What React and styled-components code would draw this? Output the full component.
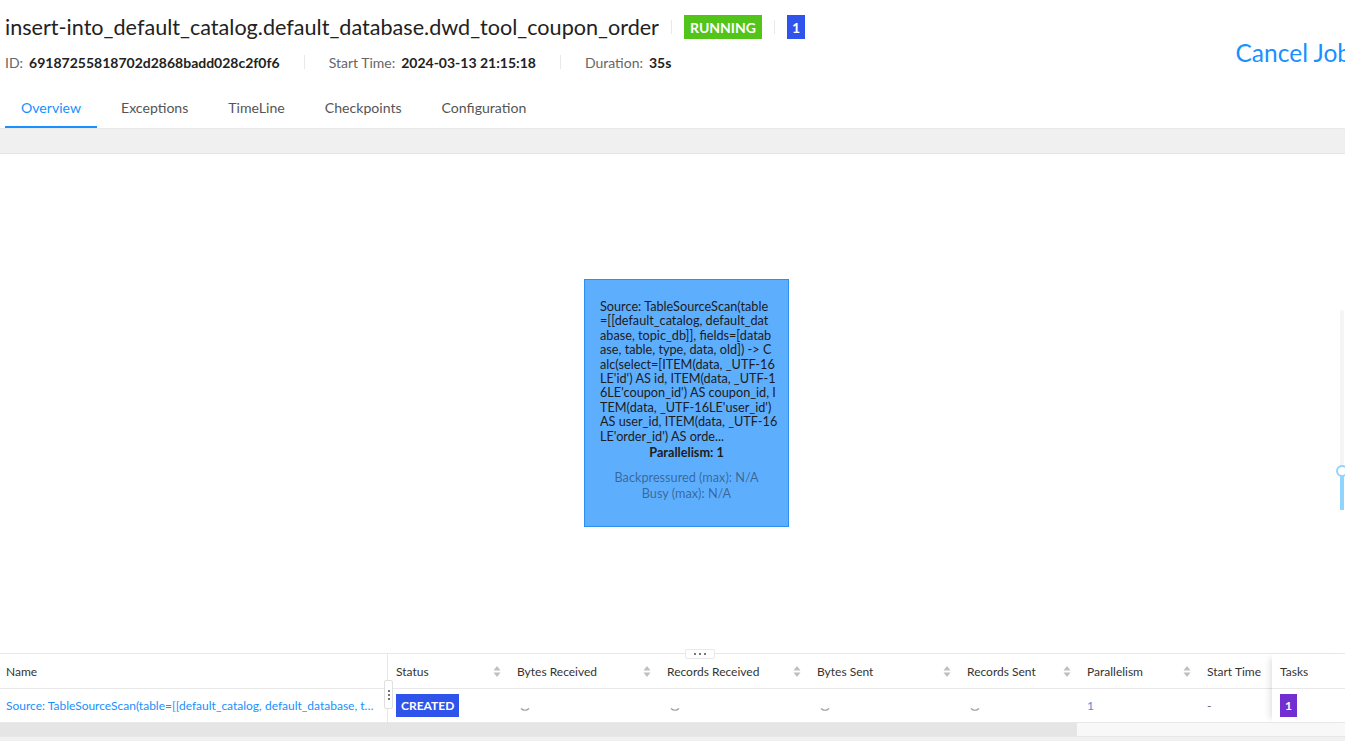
import React from 'react';
import styled, { createGlobalStyle } from 'styled-components';

const FONT = `Lato, "Noto Sans", "Liberation Sans", sans-serif`;

const GlobalStyle = createGlobalStyle`
  html, body {
    margin: 0;
    padding: 0;
    background: #f0f0f0;
  }
  body {
    font-family: ${FONT};
    color: #333;
    overflow: hidden;
  }
  * { box-sizing: border-box; }
`;

const Page = styled.div`
  width: 1345px;
  height: 741px;
  overflow: hidden;
  display: flex;
  flex-direction: column;
  background: #fff;
`;

const Header = styled.div`
  display: flex;
  align-items: flex-start;
  justify-content: space-between;
  padding: 13px 0 0 5px;
`;

const HeaderMain = styled.div`
  display: flex;
  flex-direction: column;
`;

const TitleRow = styled.div`
  display: flex;
  align-items: center;
  height: 28px;
`;

const Title = styled.h1`
  margin: 0;
  font-size: 21.6px;
  font-weight: 400;
  color: #222;
  line-height: 26px;
  white-space: nowrap;
`;

const Divider = styled.span`
  display: inline-block;
  width: 1px;
  height: ${p => p.$h || 14}px;
  background: #e8e8e8;
  margin: 0 ${p => p.$gap || 12}px;
`;

const Tag = styled.span`
  display: inline-flex;
  align-items: center;
  justify-content: center;
  height: 24px;
  padding: 0 ${p => p.$pad || 6}px;
  background: ${p => p.$bg};
  color: #fff;
  font-size: 14px;
  font-weight: 700;
`;

const MetaRow = styled.div`
  display: flex;
  align-items: center;
  height: 20px;
  margin-top: 11px;
  font-size: 14px;
`;

const Label = styled.span`
  color: #666;
  margin-right: 6px;
`;

const Value = styled.span`
  color: #222;
  font-weight: 700;
`;

const CancelLink = styled.a`
  font-size: 24.5px;
  color: #1890ff;
  white-space: nowrap;
  margin-top: 25px;
  margin-right: -6px;
  cursor: pointer;
`;

const Tabs = styled.div`
  display: flex;
  gap: 8px;
  padding-left: 5px;
  margin-top: 16px;
  border-bottom: 1px solid #e8e8e8;
`;

const Tab = styled.div`
  padding: 0 16px;
  height: 40px;
  line-height: 40px;
  font-size: 14.1px;
  color: ${p => (p.$active ? '#1890ff' : '#555')};
  border-bottom: 2px solid ${p => (p.$active ? '#1890ff' : 'transparent')};
  white-space: nowrap;
`;

const Strip = styled.div`
  height: 25px;
  flex-shrink: 0;
  background: #f0f0f0;
  border-bottom: 1px solid #e6e6e6;
`;

const Canvas = styled.div`
  position: relative;
  height: 500px;
  flex-shrink: 0;
  background: #fff;
  border-bottom: 1px solid #e8e8e8;
`;

const Node = styled.div`
  position: absolute;
  left: 584px;
  top: 125px;
  width: 205px;
  height: 248px;
  background: #5eaefe;
  border: 1px solid #2d8ff0;
  padding: 19px 8px 0 15px;
  font-size: 12.7px;
  line-height: 14.4px;
  color: #1c1c1c;
`;

const NodeLine = styled.div`
  white-space: nowrap;
`;

const NodeStrong = styled.div`
  text-align: center;
  font-weight: 700;
  margin-top: 2px;
  padding-right: 7px;
`;

const NodeMuted = styled.div`
  text-align: center;
  color: rgba(0, 0, 0, 0.42);
  line-height: 16px;
  padding-right: 7px;
  margin-top: ${p => p.$mt || 0}px;
`;

const ZoomTrack = styled.div`
  position: absolute;
  right: 1px;
  top: 156px;
  width: 4px;
  height: 200px;
  background: #f5f5f5;
  border-radius: 2px;
`;

const ZoomFill = styled.div`
  position: absolute;
  left: 0;
  top: 164px;
  width: 4px;
  height: 36px;
  background: #91d5ff;
`;

const ZoomHandle = styled.div`
  position: absolute;
  left: -4px;
  top: 155px;
  width: 12px;
  height: 12px;
  border-radius: 50%;
  border: 2px solid #91d5ff;
  background: #fff;
`;

const ResizeBar = styled.div`
  position: absolute;
  left: 685px;
  bottom: -6px;
  width: 30px;
  height: 10px;
  background: #fff;
  border: 1px solid #e8e8e8;
  border-radius: 2px;
  display: flex;
  align-items: center;
  justify-content: center;
  gap: 3px;
  z-index: 2;
`;

const TinyDot = styled.span`
  width: 2px;
  height: 2px;
  background: #777;
`;

const TableWrap = styled.div`
  position: relative;
  background: #fff;
  flex-shrink: 0;
`;

const Row = styled.div`
  display: grid;
  grid-template-columns: 388px 121px 150px 150px 150px 120px 120px 146px;
  height: ${p => p.$h}px;
  border-bottom: 1px solid #e8e8e8;
  align-items: center;
  font-size: 12px;
`;

const Cell = styled.div`
  position: relative;
  height: 100%;
  display: flex;
  align-items: center;
  justify-content: space-between;
  padding: 0 ${p => p.$pr || 8}px 0 ${p => p.$pl || 8}px;
  border-right: ${p => (p.$border ? '1px solid #e8e8e8' : 'none')};
  color: #333;
  white-space: nowrap;
  overflow: hidden;
`;

const NameLink = styled.a`
  color: #1890ff;
  overflow: hidden;
  text-overflow: ellipsis;
`;

const Badge = styled.span`
  display: inline-flex;
  align-items: center;
  justify-content: center;
  height: 23px;
  padding: 0 ${p => p.$pad || 5}px;
  background: ${p => p.$bg};
  color: #fff;
  font-weight: 700;
  font-size: 12px;
`;

const Muted = styled.span`
  color: ${p => p.$c || '#666'};
`;

const FixedCol = styled.div`
  position: absolute;
  top: 0;
  left: 1272px;
  width: 73px;
  background: #fff;
  box-shadow: -6px 0 6px -4px rgba(0, 0, 0, 0.12);
  z-index: 1;
`;

const FixedCell = styled.div`
  height: ${p => p.$h}px;
  display: flex;
  align-items: center;
  padding-left: 8px;
  font-size: 12px;
  color: #333;
  border-bottom: 1px solid #e8e8e8;
`;

const ColHandle = styled.div`
  position: absolute;
  left: 384px;
  top: 26px;
  width: 9px;
  height: 29px;
  background: #fff;
  border: 1px solid #e0e0e0;
  border-radius: 2px;
  display: flex;
  flex-direction: column;
  align-items: center;
  justify-content: center;
  gap: 2px;
  z-index: 2;
`;

const ScrollBar = styled.div`
  height: 14px;
  flex-shrink: 0;
  background: #f8f8f8;
  border-bottom: 1px solid #e8e8e8;
`;

const ScrollThumb = styled.div`
  width: 1077px;
  height: 13px;
  background: #e5e5e5;
`;

const Footer = styled.div`
  flex: 1;
  background: #f0f0f0;
`;

function SortIcon() {
  return (
    <svg width="8" height="13" viewBox="0 0 8 13">
      <path d="M4 1 L7.5 5.5 L0.5 5.5 Z" fill="#bfbfbf" />
      <path d="M4 12 L7.5 7.5 L0.5 7.5 Z" fill="#bfbfbf" />
    </svg>
  );
}

function Spinner() {
  return (
    <svg width="12" height="8" viewBox="0 0 12 8" style={{ marginLeft: 2, marginTop: 9 }}>
      <path d="M2 2.5 Q6 6 10 2.5" stroke="#999" strokeWidth="1.2" fill="none" />
    </svg>
  );
}

const nodeLines = [
  'Source: TableSourceScan(table',
  "=[[default_catalog, default_dat",
  'abase, topic_db]], fields=[datab',
  'ase, table, type, data, old]) -> C',
  'alc(select=[ITEM(data, _UTF-16',
  "LE'id') AS id, ITEM(data, _UTF-1",
  "6LE'coupon_id') AS coupon_id, I",
  "TEM(data, _UTF-16LE'user_id')",
  'AS user_id, ITEM(data, _UTF-16',
  "LE'order_id') AS orde...",
];

const columns = [
  { title: 'Name', sort: false, border: true, pl: 6 },
  { title: 'Status', sort: true },
  { title: 'Bytes Received', sort: true },
  { title: 'Records Received', sort: true },
  { title: 'Bytes Sent', sort: true },
  { title: 'Records Sent', sort: true },
  { title: 'Parallelism', sort: true },
  { title: 'Start Time', sort: false },
];

export default function App() {
  return (
    <Page>
      <GlobalStyle />
      <Header>
        <HeaderMain>
          <TitleRow>
            <Title>insert-into_default_catalog.default_database.dwd_tool_coupon_order</Title>
            <Divider />
            <Tag $bg="#52c41a">RUNNING</Tag>
            <Divider />
            <Tag $bg="#2f54eb" $pad={5}>1</Tag>
          </TitleRow>
          <MetaRow>
            <Label>ID:</Label>
            <Value>69187255818702d2868badd028c2f0f6</Value>
            <Divider $gap={24} $h={14} />
            <Label>Start Time:</Label>
            <Value>2024-03-13 21:15:18</Value>
            <Divider $gap={24} $h={14} />
            <Label>Duration:</Label>
            <Value>35s</Value>
          </MetaRow>
        </HeaderMain>
        <CancelLink>Cancel Job</CancelLink>
      </Header>

      <Tabs>
        <Tab $active>Overview</Tab>
        <Tab>Exceptions</Tab>
        <Tab>TimeLine</Tab>
        <Tab>Checkpoints</Tab>
        <Tab>Configuration</Tab>
      </Tabs>
      <Strip />

      <Canvas>
        <Node>
          {nodeLines.map((l, i) => (
            <NodeLine key={i}>{l}</NodeLine>
          ))}
          <NodeStrong>Parallelism: 1</NodeStrong>
          <NodeMuted $mt={10}>Backpressured (max): N/A</NodeMuted>
          <NodeMuted>Busy (max): N/A</NodeMuted>
        </Node>
        <ZoomTrack>
          <ZoomFill />
          <ZoomHandle />
        </ZoomTrack>
        <ResizeBar>
          <TinyDot />
          <TinyDot />
          <TinyDot />
        </ResizeBar>
      </Canvas>

      <TableWrap>
        <Row $h={35}>
          {columns.map(c => (
            <Cell key={c.title} $border={c.border} $pl={c.pl}>
              <span>{c.title}</span>
              {c.sort && <SortIcon />}
            </Cell>
          ))}
        </Row>
        <Row $h={34}>
          <Cell $border $pl={6}>
            <NameLink>Source: TableSourceScan(table=[[default_catalog, default_database, topic_db]], fields=[database, table, type, data, old])</NameLink>
          </Cell>
          <Cell>
            <Badge $bg="#2f54eb">CREATED</Badge>
          </Cell>
          <Cell><Spinner /></Cell>
          <Cell><Spinner /></Cell>
          <Cell><Spinner /></Cell>
          <Cell><Spinner /></Cell>
          <Cell><Muted $c="#5a8bd0">1</Muted></Cell>
          <Cell><Muted>-</Muted></Cell>
        </Row>
        <FixedCol>
          <FixedCell $h={35}>Tasks</FixedCell>
          <FixedCell $h={34}>
            <Badge $bg="#722ed1" $pad={5}>1</Badge>
          </FixedCell>
        </FixedCol>
        <ColHandle>
          <TinyDot />
          <TinyDot />
          <TinyDot />
        </ColHandle>
      </TableWrap>
      <ScrollBar>
        <ScrollThumb />
      </ScrollBar>
      <Footer />
    </Page>
  );
}
